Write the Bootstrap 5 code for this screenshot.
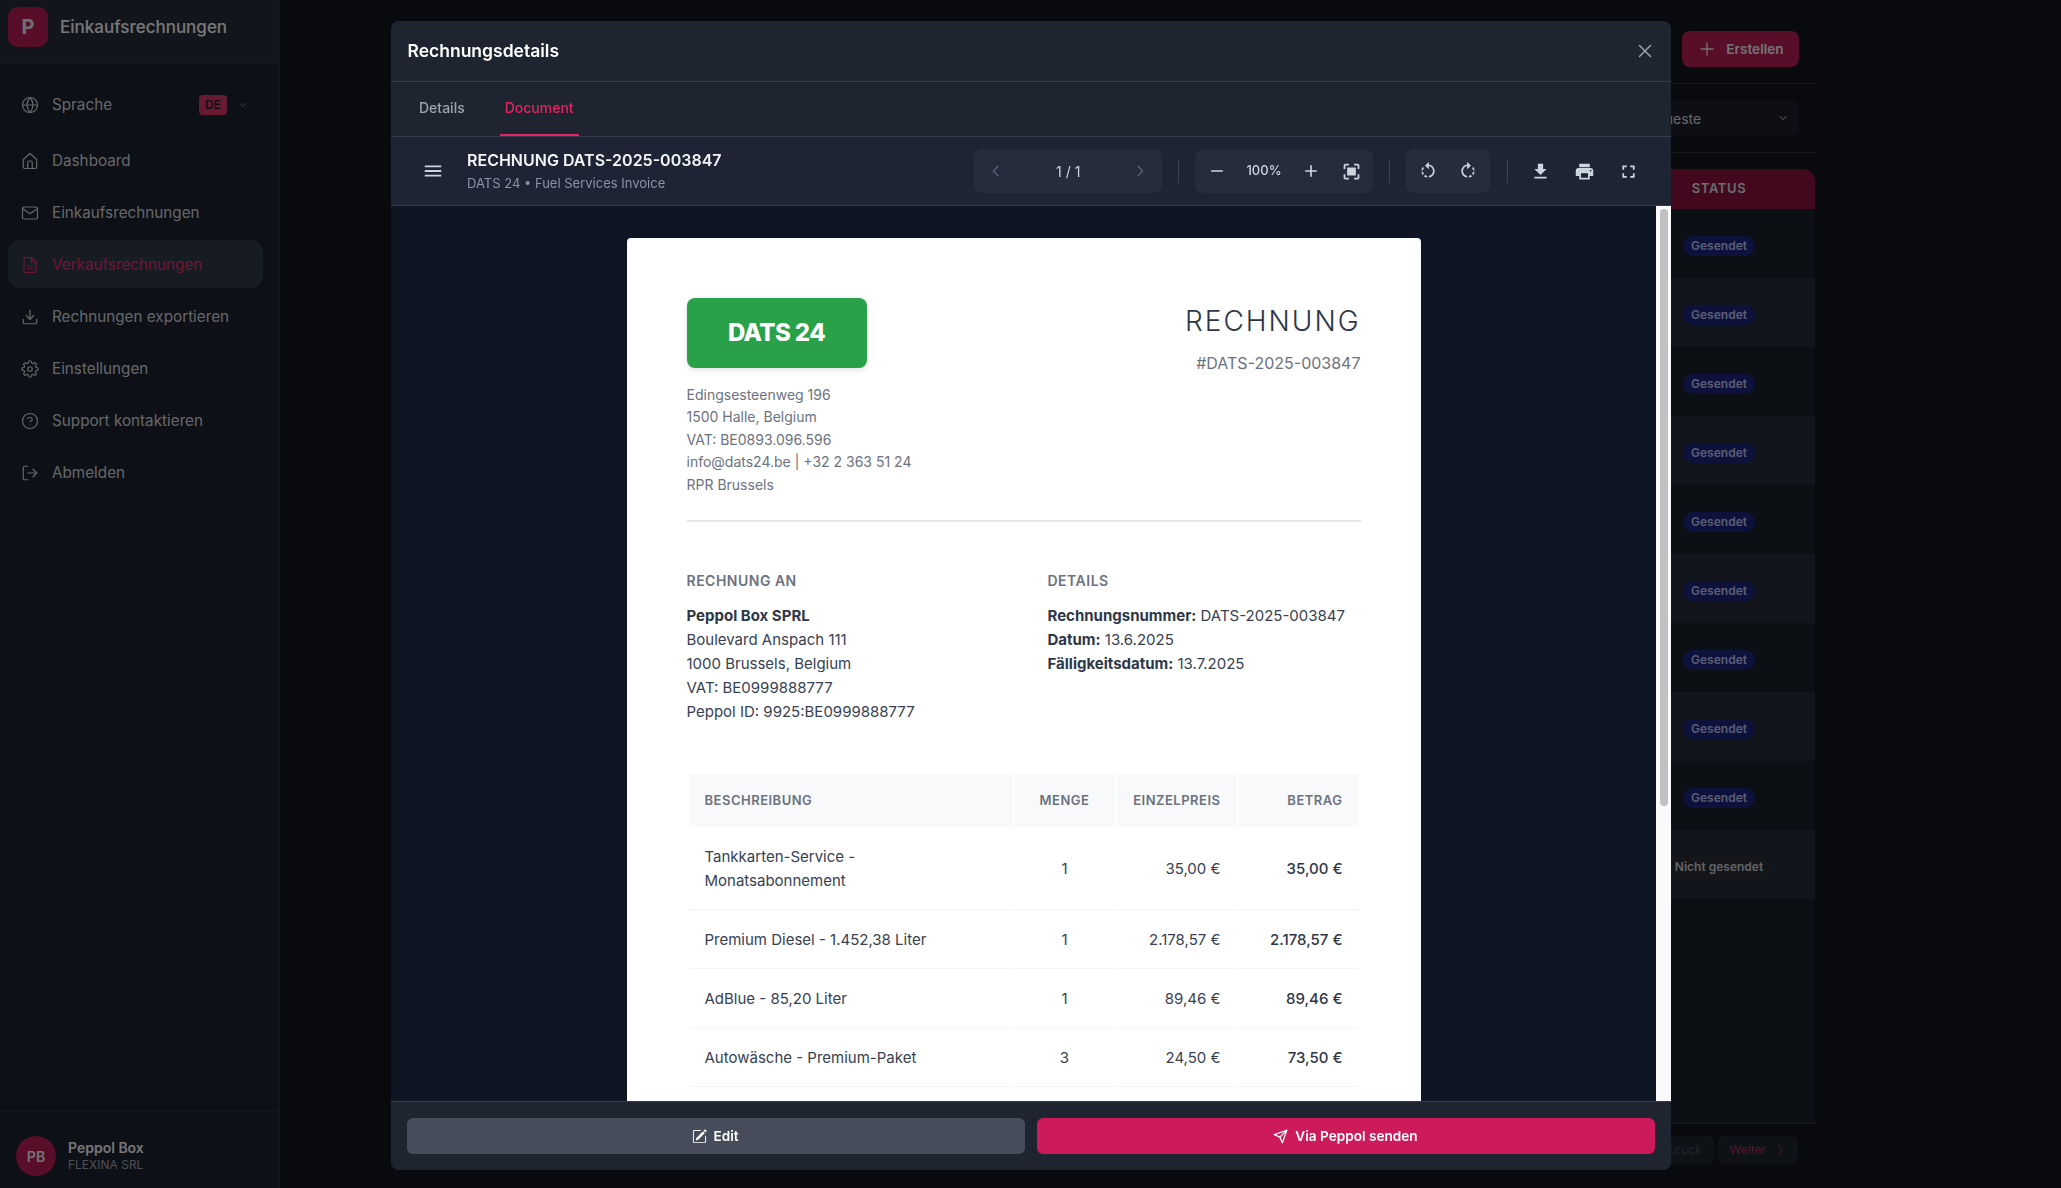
<!DOCTYPE html>
<html lang="de">
<head>
<meta charset="utf-8">
<title>Rechnungsdetails</title>
<link rel="stylesheet" href="https://cdn.jsdelivr.net/npm/bootstrap@5.3.0/dist/css/bootstrap.min.css">
<style>
html,body{height:100%;overflow:hidden}
body{background:#11151b;font-family:Inter,"Noto Sans",sans-serif;color:#e5e7eb;margin:0}
svg{display:block;flex:none}
.ico-line{fill:none;stroke:currentColor;stroke-width:2;stroke-linecap:round;stroke-linejoin:round}
.ico-fill{fill:currentColor}
/* background app */
.side{width:280px;height:1188px;flex:none;background:#1a202c;border-right:1px solid #282e39}
.side-top{height:64px;background:#252c39;border-bottom:1px solid #282e39;padding:7px 0 0 8px;gap:12px}
.side-logo{width:40px;height:40px;border-radius:10px;background:#b01a50;color:#e0e0e0;font-size:20px;font-weight:700}
.side-name{font-size:17px;font-weight:500;color:#f0f0f0}
.side-nav{padding:16px 16px 0 8px}
.side-link{height:48px;padding:2px 0 0 13px;gap:13px;font-size:15.25px;color:#cdd0d6;border-radius:12px;margin-bottom:4px}
.side-link svg{width:18px;height:18px;stroke-width:1.6}
.side-link.on{background:#2d3748;color:#e02c64}
.side-lang{margin-bottom:8px}
.lang-tag{width:28px;height:20px;border-radius:4px;background:#d03460;color:#16182a;font-size:12px;font-weight:500;margin-left:auto}
.side-link svg.lang-car{width:12px;height:12px;margin:0 14px 0 -3px;color:#9ca3af}
.side-foot{margin-top:auto;height:77px;border-top:1px solid #282e39;padding:24px 0 0 16px;gap:12px}
.side-ava{width:40px;height:40px;background:#b01a50;color:#e8e8e8;font-size:14px;font-weight:600}
.side-user{font-size:14px;font-weight:600;color:#eceded;line-height:17px;margin-top:3px}
.side-org{font-size:12px;color:#9ca3af;line-height:17px}
.main-area{width:1415px;margin-left:120px;height:1188px;flex:none}
.bar-one{height:84px;border-bottom:1px solid #2e343f;padding-right:16px;padding-top:31px}
.btn-make{width:117px;height:36px;background:#b01a50;border:0;border-radius:8px;color:#e8e8e8;font-size:13.6px;font-weight:600;gap:11px;padding:0 0 0 2px}
.bar-two{height:69px;border-bottom:1px solid #2e343f;padding:16px 16px 0 0}
.sort-box{width:180px;height:36px;background:#1a1f2a;border-radius:8px;color:#cdd0d6;font-size:14px;padding:0 10px 0 27px}
.sheet-wrap{height:955px;margin-top:16px;border-radius:12px 12px 0 0;background:#181e29;border-bottom:1px solid #2e343f;overflow:hidden}
.status-tbl{margin:0;table-layout:fixed;--bs-table-bg:transparent;--bs-table-color:#fff}
.status-tbl>:not(caption)>*>*{border:0;padding:0;height:69px;vertical-align:middle;background:transparent}
.status-tbl thead th{height:40px;background:#85133d;font-size:13px;font-weight:600;letter-spacing:.6px;color:#d8dadd;text-align:center}
.status-tbl tbody tr:nth-child(even) td{background:#252c38}
.state-pill{display:inline-block;height:20px;line-height:20px;padding:0 8px;border-radius:10px;font-size:12px;font-weight:600}
.state-sent{background:#1a2478;color:#b4bceb}
.state-draft{background:#282d35;color:#c4c7cc}
.pager-row{height:52px;padding:12px 17px 0 0;gap:4px}
.pager-btn{height:28px;border-radius:6px;background:#1d232d;font-size:12px;padding:0 12px;gap:8px}
.pager-prev{color:#444a55}
.pager-next{color:#9c3352}
.dimmer{position:fixed;inset:0;background:rgba(0,0,0,.5);backdrop-filter:blur(.5px);z-index:10}
/* modal */
.modal.sheet-modal{z-index:20;overflow:hidden}
.sheet-modal .modal-dialog{max-width:1280px;width:1280px;margin:21px 0 0 390.5px;height:1149px}
.sheet-modal .modal-content{height:1149px;background:#1f2530;border:0;border-radius:8px;overflow:hidden;color:#fff}
.sheet-modal .modal-header{height:61px;padding:0 16px 0 17px;border-bottom:1px solid #363c49;border-radius:0;flex:none}
.sheet-modal .modal-title{font-size:17.5px;font-weight:600;color:#fff}
.x-btn{background:none;border:0;padding:0;color:#9ca3af}
.tab-strip{height:55px;flex:none;padding-left:23.5px;border-bottom:1px solid #363c49;gap:30px}
.tab-item{height:54px;padding:0 5px 4px;font-size:14px;font-weight:500;color:#9ca3af;display:flex;align-items:center;text-decoration:none}
.tab-item.on{color:#e6245f;padding-bottom:2px;border-bottom:2px solid #e6245f}
.view-bar{height:69px;background:#1e2433;border-bottom:1px solid #363c49;padding:0 20px 0 0;flex:none}
.menu-btn{width:36px;height:36px;margin:0 16.5px 0 24px;background:none;border:0;padding:0;color:#cbd5e0}
.doc-head{font-size:16px;font-weight:600;color:#f3f4f6;line-height:22px}
.doc-sub{font-size:13px;color:#8a94a6;line-height:22px;margin-top:1px}
.tool-set{height:44px;background:#252d3d;border-radius:8px;padding:0 2px}
.tool-btn{width:40px;height:44px;background:none;border:0;padding:0;color:#cbd5e0}
.tool-btn.dim{color:#5a6476}
.tool-btn.solo{width:44px}
.page-info{width:103.6px;text-align:center;font-size:14px;color:#cbd5e0}
.zoom-info{width:54px;text-align:center;font-size:13px;font-weight:500;color:#cbd5e0}
.tool-sep{width:1px;height:24px;background:#3b4352;margin:0 16px}
.tool-sep.last{margin:0 11px 0 16.5px}
.doc-row{flex:1;min-height:0}
.doc-scroll{flex:1;min-width:0;overflow:hidden;background:#0f1623;padding:32px 0}
.rail{width:15px;flex:none;background:#fafafa;padding:3px 3px 0 4px}
.rail-thumb{height:597px;background:#c1c1c1;border-radius:4px}
.doc-page{width:794px;height:1264px;margin:0 0 0 236px;background:#fff;border-radius:4px;padding:60px;font-size:15px;line-height:24px;color:#374151}
.brand-box{width:180px;height:70px;background:#28a149;border-radius:8px;color:#fff;font-size:24px;font-weight:800;letter-spacing:-.6px;box-shadow:0 2px 6px rgba(0,0,0,.12)}
.seller{margin-top:16px;font-size:14px;line-height:22.4px;color:#6b7280}
.doc-word{font-size:28px;font-weight:300;letter-spacing:2px;color:#2d3748;line-height:42px;margin-top:1.5px}
.doc-num{font-size:16px;color:#6b7280;margin-top:9.5px;line-height:24px}
.rule-line{height:2px;background:#e5e7eb;margin-top:24px}
.party-grid{display:grid;grid-template-columns:1fr 1fr;column-gap:48px;margin-top:48px}
.party-cap{font-size:14px;font-weight:600;letter-spacing:.5px;color:#6b7280;line-height:22px;margin-bottom:12px}
.party-line b{font-weight:700;color:#2d3748}
.inv-tbl{margin:48px 0 0;width:674px;table-layout:fixed;border-collapse:separate;border-spacing:2px;--bs-table-bg:transparent;color:#374151}
.inv-tbl>:not(caption)>*>*{padding:16px;border:0;border-bottom:1px solid #f3f4f6;vertical-align:middle;line-height:24px;color:#374151}
.inv-tbl>thead>tr>th{background:#f8f9fa;border:0;font-size:13px;line-height:21px;font-weight:600;letter-spacing:.5px;color:#6b7280;text-transform:uppercase}
.inv-tbl td.amt{font-weight:500;color:#2d3748}
.sheet-modal .modal-footer{height:69px;flex:none;padding:0 16px;gap:12px;background:#1f2530;border-top:1px solid #363c49;flex-wrap:nowrap;border-radius:0}
.foot-btn{flex:1;height:36px;margin:0!important;border:0;border-radius:6px;font-size:13.6px;font-weight:600;color:#fff;gap:6px}
.foot-edit{background:#464c5a}
.foot-send{background:#cd1a5a;gap:7px}
</style>
</head>
<body class="d-flex">

<aside class="side d-flex flex-column">
  <div class="side-top d-flex align-items-start">
    <div class="side-logo d-flex align-items-center justify-content-center">P</div>
    <div class="side-name mt-1 pt-1">Einkaufsrechnungen</div>
  </div>
  <nav class="side-nav d-flex flex-column">
    <div class="side-link side-lang d-flex align-items-center">
      <svg class="ico-line" viewBox="0 0 24 24"><circle cx="12" cy="12" r="10"/><line x1="2" y1="12" x2="22" y2="12"/><path d="M12 2a15.3 15.3 0 0 1 4 10 15.3 15.3 0 0 1-4 10 15.3 15.3 0 0 1-4-10 15.3 15.3 0 0 1 4-10z"/></svg>
      <span>Sprache</span>
      <span class="lang-tag d-flex align-items-center justify-content-center">DE</span>
      <svg class="ico-line lang-car" viewBox="0 0 24 24"><polyline points="6 9 12 15 18 9"/></svg>
    </div>
    <a class="side-link d-flex align-items-center text-decoration-none" href="#">
      <svg class="ico-line" viewBox="0 0 24 24"><path d="M3 10l9-8 9 8v10a2 2 0 0 1-2 2H5a2 2 0 0 1-2-2z"/><path d="M9 22v-8a2 2 0 0 1 2-2h2a2 2 0 0 1 2 2v8"/></svg>
      <span>Dashboard</span></a>
    <a class="side-link d-flex align-items-center text-decoration-none" href="#">
      <svg class="ico-line" viewBox="0 0 24 24"><path d="M4 4h16c1.1 0 2 .9 2 2v12c0 1.1-.9 2-2 2H4c-1.1 0-2-.9-2-2V6c0-1.1.9-2 2-2z"/><polyline points="22,6 12,13 2,6"/></svg>
      <span>Einkaufsrechnungen</span></a>
    <a class="side-link on d-flex align-items-center text-decoration-none" href="#">
      <svg class="ico-line" viewBox="0 0 24 24"><path d="M14 2H6a2 2 0 0 0-2 2v16a2 2 0 0 0 2 2h12a2 2 0 0 0 2-2V8z"/><polyline points="14 2 14 8 20 8"/><line x1="16" y1="13" x2="8" y2="13"/><line x1="16" y1="17" x2="8" y2="17"/></svg>
      <span>Verkaufsrechnungen</span></a>
    <a class="side-link d-flex align-items-center text-decoration-none" href="#">
      <svg class="ico-line" viewBox="0 0 24 24"><path d="M21 15v4a2 2 0 0 1-2 2H5a2 2 0 0 1-2-2v-4"/><polyline points="7 10 12 15 17 10"/><line x1="12" y1="15" x2="12" y2="3"/></svg>
      <span>Rechnungen exportieren</span></a>
    <a class="side-link d-flex align-items-center text-decoration-none" href="#">
      <svg class="ico-line" viewBox="0 0 24 24"><circle cx="12" cy="12" r="3"/><path d="M19.4 15a1.65 1.65 0 0 0 .33 1.82l.06.06a2 2 0 0 1 0 2.83 2 2 0 0 1-2.83 0l-.06-.06a1.65 1.65 0 0 0-1.82-.33 1.65 1.65 0 0 0-1 1.51V21a2 2 0 0 1-2 2 2 2 0 0 1-2-2v-.09A1.65 1.65 0 0 0 9 19.4a1.65 1.65 0 0 0-1.82.33l-.06.06a2 2 0 0 1-2.83 0 2 2 0 0 1 0-2.83l.06-.06a1.65 1.65 0 0 0 .33-1.82 1.65 1.65 0 0 0-1.51-1H3a2 2 0 0 1-2-2 2 2 0 0 1 2-2h.09A1.65 1.65 0 0 0 4.6 9a1.65 1.65 0 0 0-.33-1.82l-.06-.06a2 2 0 0 1 0-2.83 2 2 0 0 1 2.83 0l.06.06a1.65 1.65 0 0 0 1.82.33H9a1.65 1.65 0 0 0 1-1.51V3a2 2 0 0 1 2-2 2 2 0 0 1 2 2v.09a1.65 1.65 0 0 0 1 1.51 1.65 1.65 0 0 0 1.82-.33l.06-.06a2 2 0 0 1 2.83 0 2 2 0 0 1 0 2.83l-.06.06a1.65 1.65 0 0 0-.33 1.82V9a1.65 1.65 0 0 0 1.51 1H21a2 2 0 0 1 2 2 2 2 0 0 1-2 2h-.09a1.65 1.65 0 0 0-1.51 1z"/></svg>
      <span>Einstellungen</span></a>
    <a class="side-link d-flex align-items-center text-decoration-none" href="#">
      <svg class="ico-line" viewBox="0 0 24 24"><circle cx="12" cy="12" r="10"/><path d="M9.09 9a3 3 0 0 1 5.83 1c0 2-3 3-3 3"/><line x1="12" y1="17" x2="12.01" y2="17"/></svg>
      <span>Support kontaktieren</span></a>
    <a class="side-link d-flex align-items-center text-decoration-none" href="#">
      <svg class="ico-line" viewBox="0 0 24 24"><path d="M9 21H5a2 2 0 0 1-2-2V5a2 2 0 0 1 2-2h4"/><polyline points="16 17 21 12 16 7"/><line x1="21" y1="12" x2="9" y2="12"/></svg>
      <span>Abmelden</span></a>
  </nav>
  <div class="side-foot d-flex align-items-start">
    <div class="side-ava rounded-circle d-flex align-items-center justify-content-center">PB</div>
    <div><div class="side-user">Peppol Box</div><div class="side-org">FLEXINA SRL</div></div>
  </div>
</aside>

<main class="main-area d-flex flex-column">
  <div class="bar-one d-flex justify-content-end align-items-start">
    <button class="btn-make d-flex align-items-center justify-content-center" type="button">
      <svg class="ico-line" width="16" height="16" viewBox="0 0 24 24"><line x1="12" y1="3" x2="12" y2="21"/><line x1="3" y1="12" x2="21" y2="12"/></svg>Erstellen</button>
  </div>
  <div class="bar-two d-flex justify-content-end align-items-start">
    <div class="sort-box d-flex align-items-center justify-content-between"><span>Neueste</span>
      <svg class="ico-line" width="12" height="12" viewBox="0 0 24 24"><polyline points="6 9 12 15 18 9"/></svg></div>
  </div>
  <div class="sheet-wrap">
    <table class="table status-tbl">
      <colgroup><col><col style="width:192px"></colgroup>
      <thead><tr><th></th><th>STATUS</th></tr></thead>
      <tbody>
        <tr><td></td><td class="text-center"><span class="state-pill state-sent">Gesendet</span></td></tr>
        <tr><td></td><td class="text-center"><span class="state-pill state-sent">Gesendet</span></td></tr>
        <tr><td></td><td class="text-center"><span class="state-pill state-sent">Gesendet</span></td></tr>
        <tr><td></td><td class="text-center"><span class="state-pill state-sent">Gesendet</span></td></tr>
        <tr><td></td><td class="text-center"><span class="state-pill state-sent">Gesendet</span></td></tr>
        <tr><td></td><td class="text-center"><span class="state-pill state-sent">Gesendet</span></td></tr>
        <tr><td></td><td class="text-center"><span class="state-pill state-sent">Gesendet</span></td></tr>
        <tr><td></td><td class="text-center"><span class="state-pill state-sent">Gesendet</span></td></tr>
        <tr><td></td><td class="text-center"><span class="state-pill state-sent">Gesendet</span></td></tr>
        <tr><td></td><td class="text-center"><span class="state-pill state-draft">Nicht gesendet</span></td></tr>
      </tbody>
    </table>
  </div>
  <div class="pager-row d-flex justify-content-end align-items-start">
    <div class="pager-btn pager-prev d-flex align-items-center">Zurück</div>
    <div class="pager-btn pager-next d-flex align-items-center">Weiter
      <svg class="ico-line" width="12" height="12" viewBox="0 0 24 24"><polyline points="9 4 17 12 9 20"/></svg></div>
  </div>
</main>

<div class="dimmer"></div>

<div class="modal sheet-modal d-block" role="dialog">
  <div class="modal-dialog">
    <div class="modal-content d-flex flex-column">
      <div class="modal-header">
        <h5 class="modal-title">Rechnungsdetails</h5>
        <button class="x-btn ms-auto" type="button" aria-label="Close">
          <svg width="20" height="20" viewBox="0 0 20 20" fill="none" stroke="currentColor" stroke-width="1.5" stroke-linecap="round"><path d="M4.5 4.5l11 11M15.5 4.5l-11 11"/></svg>
        </button>
      </div>
      <div class="tab-strip d-flex">
        <a class="tab-item" href="#">Details</a>
        <a class="tab-item on" href="#">Document</a>
      </div>
      <div class="view-bar d-flex align-items-center">
        <button class="menu-btn d-flex align-items-center justify-content-center" type="button">
          <svg class="ico-fill" width="22" height="22" viewBox="0 0 24 24"><path d="M3 18h18v-2H3v2zm0-5h18v-2H3v2zm0-7v2h18V6H3z"/></svg>
        </button>
        <div class="me-auto">
          <div class="doc-head">RECHNUNG DATS-2025-003847</div>
          <div class="doc-sub">DATS 24 • Fuel Services Invoice</div>
        </div>
        <div class="tool-set d-flex align-items-center">
          <button class="tool-btn dim d-flex align-items-center justify-content-center" type="button"><svg class="ico-line" width="16" height="16" viewBox="0 0 24 24"><polyline points="15 5 8 12 15 19"/></svg></button>
          <span class="page-info">1 / 1</span>
          <button class="tool-btn dim d-flex align-items-center justify-content-center" type="button"><svg class="ico-line" width="16" height="16" viewBox="0 0 24 24"><polyline points="9 5 16 12 9 19"/></svg></button>
        </div>
        <div class="tool-sep"></div>
        <div class="tool-set d-flex align-items-center">
          <button class="tool-btn d-flex align-items-center justify-content-center" type="button"><svg class="ico-fill" width="20" height="20" viewBox="0 0 24 24"><path d="M19 13H5v-2h14v2z"/></svg></button>
          <span class="zoom-info">100%</span>
          <button class="tool-btn d-flex align-items-center justify-content-center" type="button"><svg class="ico-fill" width="20" height="20" viewBox="0 0 24 24"><path d="M19 13h-6v6h-2v-6H5v-2h6V5h2v6h6v2z"/></svg></button>
          <button class="tool-btn d-flex align-items-center justify-content-center" type="button"><svg class="ico-fill" width="21" height="21" viewBox="0 0 24 24"><path d="M3 5v4h2V5h4V3H5c-1.1 0-2 .9-2 2zm2 10H3v4c0 1.1.9 2 2 2h4v-2H5v-4zm14 4h-4v2h4c1.1 0 2-.9 2-2v-4h-2v4zm0-16h-4v2h4v4h2V5c0-1.1-.9-2-2-2z"/><rect x="7" y="7.5" width="10" height="9" rx=".6"/></svg></button>
        </div>
        <div class="tool-sep"></div>
        <div class="tool-set d-flex align-items-center">
          <button class="tool-btn d-flex align-items-center justify-content-center" type="button"><svg class="ico-fill" width="20" height="20" viewBox="0 0 24 24"><path d="M7.11 8.53L5.7 7.11C4.8 8.27 4.24 9.61 4.07 11h2.02c.14-.87.49-1.72 1.02-2.47zM6.09 13H4.07c.17 1.39.72 2.73 1.62 3.89l1.41-1.42c-.52-.75-.87-1.59-1.01-2.47zm1.01 5.32c1.16.9 2.51 1.44 3.9 1.61V17.9c-.87-.15-1.71-.49-2.46-1.03L7.1 18.32zM13 4.07V1L8.45 5.55 13 10V6.09c2.84.48 5 2.94 5 5.91s-2.16 5.43-5 5.91v2.02c3.95-.49 7-3.85 7-7.93s-3.05-7.44-7-7.93z"/></svg></button>
          <button class="tool-btn d-flex align-items-center justify-content-center" type="button"><svg class="ico-fill" width="20" height="20" viewBox="0 0 24 24"><path d="M15.55 5.55L11 1v3.07C7.06 4.56 4 7.92 4 12s3.05 7.44 7 7.93v-2.02c-2.84-.48-5-2.94-5-5.91s2.16-5.43 5-5.91V10l4.55-4.45zM19.93 11c-.17-1.39-.72-2.73-1.62-3.89l-1.42 1.42c.54.75.88 1.6 1.02 2.47h2.02zM13 17.9v2.02c1.39-.17 2.74-.71 3.9-1.61l-1.44-1.44c-.75.54-1.59.89-2.46 1.03zm3.89-2.42l1.42 1.41c.9-1.16 1.45-2.5 1.62-3.89h-2.02c-.14.87-.48 1.72-1.02 2.48z"/></svg></button>
        </div>
        <div class="tool-sep last"></div>
        <button class="tool-btn solo d-flex align-items-center justify-content-center" type="button"><svg class="ico-fill" width="21" height="21" viewBox="0 0 24 24"><path d="M19 9h-4V3H9v6H5l7 7 7-7zM5 18v2h14v-2H5z"/></svg></button>
        <button class="tool-btn solo d-flex align-items-center justify-content-center" type="button"><svg class="ico-fill" width="21" height="21" viewBox="0 0 24 24"><path d="M19 8H5c-1.66 0-3 1.34-3 3v6h4v4h12v-4h4v-6c0-1.66-1.34-3-3-3zm-3 11H8v-5h8v5zm3-7c-.55 0-1-.45-1-1s.45-1 1-1 1 .45 1 1-.45 1-1 1zm-1-9H6v4h12V3z"/></svg></button>
        <button class="tool-btn solo d-flex align-items-center justify-content-center" type="button"><svg class="ico-fill" width="21" height="21" viewBox="0 0 24 24"><path d="M7 14H5v5h5v-2H7v-3zm-2-4h2V7h3V5H5v5zm12 7h-3v2h5v-5h-2v3zM14 5v2h3v3h2V5h-5z"/></svg></button>
      </div>
      <div class="doc-row d-flex">
        <div class="doc-scroll">
          <article class="doc-page">
            <div class="d-flex justify-content-between align-items-start">
              <div>
                <div class="brand-box d-flex align-items-center justify-content-center">DATS 24</div>
                <div class="seller">Edingsesteenweg 196<br>1500 Halle, Belgium<br>VAT: BE0893.096.596<br>info@dats24.be | +32 2 363 51 24<br>RPR Brussels</div>
              </div>
              <div class="text-end">
                <div class="doc-word">RECHNUNG</div>
                <div class="doc-num">#DATS-2025-003847</div>
              </div>
            </div>
            <div class="rule-line"></div>
            <div class="party-grid">
              <div>
                <div class="party-cap">RECHNUNG AN</div>
                <div class="party-line"><b>Peppol Box SPRL</b><br>Boulevard Anspach 111<br>1000 Brussels, Belgium<br>VAT: BE0999888777<br>Peppol ID: 9925:BE0999888777</div>
              </div>
              <div>
                <div class="party-cap">DETAILS</div>
                <div class="party-line"><b>Rechnungsnummer:</b> DATS-2025-003847<br><b>Datum:</b> 13.6.2025<br><b>Fälligkeitsdatum:</b> 13.7.2025</div>
              </div>
            </div>
            <table class="table inv-tbl">
              <colgroup><col style="width:324px"><col style="width:100px"><col style="width:120px"><col style="width:120px"></colgroup>
              <thead><tr><th>Beschreibung</th><th class="text-center">Menge</th><th class="text-end">Einzelpreis</th><th class="text-end">Betrag</th></tr></thead>
              <tbody>
                <tr><td>Tankkarten-Service - Monatsabonnement</td><td class="text-center">1</td><td class="text-end">35,00 €</td><td class="text-end amt">35,00 €</td></tr>
                <tr><td>Premium Diesel - 1.452,38 Liter</td><td class="text-center">1</td><td class="text-end">2.178,57 €</td><td class="text-end amt">2.178,57 €</td></tr>
                <tr><td>AdBlue - 85,20 Liter</td><td class="text-center">1</td><td class="text-end">89,46 €</td><td class="text-end amt">89,46 €</td></tr>
                <tr><td>Autowäsche - Premium-Paket</td><td class="text-center">3</td><td class="text-end">24,50 €</td><td class="text-end amt">73,50 €</td></tr>
              </tbody>
            </table>
          </article>
        </div>
        <div class="rail"><div class="rail-thumb"></div></div>
      </div>
      <div class="modal-footer">
        <button class="foot-btn foot-edit d-flex align-items-center justify-content-center" type="button">
          <svg class="ico-fill" width="15" height="15" viewBox="0 0 16 16"><path d="M15.502 1.94a.5.5 0 0 1 0 .706L14.459 3.69l-2-2L13.502.646a.5.5 0 0 1 .707 0l1.293 1.293zm-1.75 2.456-2-2L4.939 9.21a.5.5 0 0 0-.121.196l-.805 2.414a.25.25 0 0 0 .316.316l2.414-.805a.5.5 0 0 0 .196-.12l6.813-6.814z"/><path fill-rule="evenodd" d="M1 13.5A1.5 1.5 0 0 0 2.5 15h11a1.5 1.5 0 0 0 1.5-1.5v-6a.5.5 0 0 0-1 0v6a.5.5 0 0 1-.5.5h-11a.5.5 0 0 1-.5-.5v-11a.5.5 0 0 1 .5-.5H9a.5.5 0 0 0 0-1H2.5A1.5 1.5 0 0 0 1 2.5v11z"/></svg>
          Edit</button>
        <button class="foot-btn foot-send d-flex align-items-center justify-content-center" type="button">
          <svg class="ico-line" width="15" height="15" viewBox="0 0 24 24"><line x1="22" y1="2" x2="11" y2="13"/><polygon points="22 2 15 22 11 13 2 9 22 2"/></svg>
          Via Peppol senden</button>
      </div>
    </div>
  </div>
</div>

<script src="https://cdn.jsdelivr.net/npm/bootstrap@5.3.0/dist/js/bootstrap.bundle.min.js"></script>
</body>
</html>
